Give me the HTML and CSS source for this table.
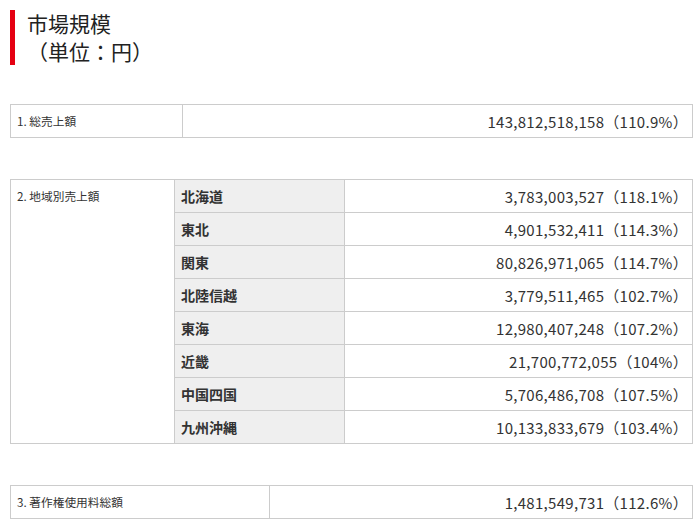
FILE: index.html
```html
<!DOCTYPE html>
<html lang="ja">
<head>
<meta charset="utf-8">
<link rel="stylesheet" href="styles.css">
</head>
<body>
<h2 class="title">市場規模<br>（単位：円）</h2>

<table class="tbl">
  <tr>
    <th class="label w1">1. 総売上額</th>
    <td class="num">143,812,518,158（110.9%）</td>
  </tr>
</table>

<table class="tbl">
  <tr>
    <th class="label w2" rowspan="8">2. 地域別売上額</th>
    <th class="region">北海道</th>
    <td class="num">3,783,003,527（118.1%）</td>
  </tr>
  <tr><th class="region">東北</th><td class="num">4,901,532,411（114.3%）</td></tr>
  <tr><th class="region">関東</th><td class="num">80,826,971,065（114.7%）</td></tr>
  <tr><th class="region">北陸信越</th><td class="num">3,779,511,465（102.7%）</td></tr>
  <tr><th class="region">東海</th><td class="num">12,980,407,248（107.2%）</td></tr>
  <tr><th class="region">近畿</th><td class="num">21,700,772,055（104%）</td></tr>
  <tr><th class="region">中国四国</th><td class="num">5,706,486,708（107.5%）</td></tr>
  <tr><th class="region">九州沖縄</th><td class="num">10,133,833,679（103.4%）</td></tr>
</table>

<table class="tbl last">
  <tr>
    <th class="label w3">3. 著作権使用料総額</th>
    <td class="num">1,481,549,731（112.6%）</td>
  </tr>
</table>
</body>
</html>
```
FILE: styles.css
```css
html, body {
  margin: 0;
  padding: 0;
  background: #fff;
}
body {
  padding: 10px 7px 0 10px;
  font-family: "Noto Sans CJK JP", "Noto Sans", sans-serif;
  color: #333;
}
.title {
  margin: 0 0 39px 0;
  border-left: 5px solid #e50012;
  padding-left: 12px;
  font-size: 21px;
  font-weight: normal;
  line-height: 27.5px;
  color: #222;
}
.tbl {
  width: 683px;
  border-collapse: collapse;
  margin-bottom: 41px;
  table-layout: fixed;
}
.tbl.last {
  margin-bottom: 0;
}
.tbl th, .tbl td {
  border: 1px solid #ccc;
  height: 33px;
  padding: 0;
  box-sizing: border-box;
}
.label {
  text-align: left;
  vertical-align: top;
  font-weight: normal;
  font-size: 11.7px;
  line-height: 16px;
  padding: 8px 6px 0 6px !important;
  color: #333;
}
.w1 { width: 172px; }
.w2 { width: 164px; }
.w3 { width: 259px; }
.region {
  width: 170px;
  background: #efefef;
  text-align: left;
  font-size: 14px;
  font-weight: bold;
  padding: 0 6px !important;
  color: #333;
}
.num {
  text-align: right;
  font-size: 15px;
  letter-spacing: 0.3px;
  padding: 0 4px 0 0 !important;
  color: #333;
}
```
